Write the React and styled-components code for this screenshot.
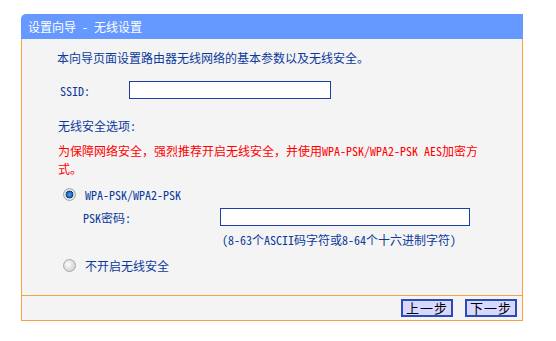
import React from "react";
import styled, { createGlobalStyle } from "styled-components";

const GlobalStyle = createGlobalStyle`
  html, body {
    margin: 0;
    padding: 0;
    background: #ffffff;
  }
  body {
    font-family: "Noto Sans Mono CJK SC", "Noto Sans CJK SC", monospace;
    font-size: 12px;
    color: #0b3a9c;
  }
`;

const Page = styled.div`
  width: 556px;
  height: 341px;
  padding: 14px 0 0 21px;
  box-sizing: border-box;
`;

const Panel = styled.div`
  width: 502px;
`;

const Header = styled.div`
  height: 25px;
  line-height: 25px;
  background: #6699ff;
  color: #ffffff;
  padding-left: 7px;
  border-top-left-radius: 5px;
`;

const Body = styled.div`
  height: 256px;
  box-sizing: border-box;
  background: #f4f4f4;
  border-left: 1px solid #f8a046;
  border-right: 1px solid #f8a046;
  padding: 10px 0 0 35px;
  display: flex;
  flex-direction: column;
`;

const Line = styled.div`
  line-height: 18px;
  margin-top: ${(p) => p.$top || 0}px;
  padding-left: ${(p) => p.$indent || 0}px;
  color: ${(p) => (p.$warn ? "#ff0000" : "#0b3a9c")};
  width: ${(p) => p.$width || "auto"};
`;

const FieldRow = styled.div`
  display: flex;
  align-items: center;
  height: 18px;
  margin-top: ${(p) => p.$top || 0}px;
  padding-left: ${(p) => p.$indent || 0}px;
`;

const Label = styled.span`
  width: ${(p) => p.$width}px;
  flex: none;
`;

const TextInput = styled.input`
  box-sizing: border-box;
  width: ${(p) => p.$width}px;
  height: 18px;
  border: 1px solid #1c3fa6;
  background: #ffffff;
  padding: 0 3px;
  margin: 0;
  outline: none;
  font: inherit;
`;

const Radio = styled.span`
  width: 13px;
  height: 13px;
  border-radius: 50%;
  flex: none;
  box-sizing: border-box;
  border: 1px solid #a8a8a8;
  background: ${(p) =>
    p.$checked
      ? "radial-gradient(circle at 50% 50%, #4aa6e8 0, #1a6fc0 2.5px, #0d3f7a 3.6px, #e9e9e9 4.2px, #d0d0d0 100%)"
      : "radial-gradient(circle at 40% 40%, #ffffff 0, #e4e4e4 4px, #c8c8c8 100%)"};
  margin-right: 9px;
`;

const Footer = styled.div`
  height: 26px;
  box-sizing: border-box;
  background: #f4f4f4;
  border: 1px solid #f8a046;
  display: flex;
  justify-content: flex-end;
  align-items: center;
  gap: 12px;
  padding-right: 5px;
`;

const Button = styled.button`
  width: 52px;
  height: 18px;
  box-sizing: border-box;
  border: 2px solid #2a4cb4;
  background: #d6d8ff;
  color: #000000;
  font-family: "Noto Sans CJK SC", sans-serif;
  font-size: 13px;
  line-height: 14px;
  padding: 0;
  letter-spacing: 1px;
`;

export default function App() {
  return (
    <Page>
      <GlobalStyle />
      <Panel>
        <Header>设置向导 - 无线设置</Header>
        <Body>
          <Line>本向导页面设置路由器无线网络的基本参数以及无线安全。</Line>
          <FieldRow $top={14} $indent={3}>
            <Label $width={69}>SSID:</Label>
            <TextInput $width={202} defaultValue="" />
          </FieldRow>
          <Line $top={18} $indent={1}>无线安全选项:</Line>
          <Line $top={7} $indent={1} $warn $width="430px">
            为保障网络安全，强烈推荐开启无线安全，并使用WPA-PSK/WPA2-PSK AES加密方式。
          </Line>
          <FieldRow $top={7} $indent={6}>
            <Radio $checked />
            <span>WPA-PSK/WPA2-PSK</span>
          </FieldRow>
          <FieldRow $top={5} $indent={26}>
            <Label $width={137}>PSK密码:</Label>
            <TextInput $width={250} defaultValue="" />
          </FieldRow>
          <Line $top={5} $indent={165}>(8-63个ASCII码字符或8-64个十六进制字符)</Line>
          <FieldRow $top={7} $indent={6}>
            <Radio />
            <span>不开启无线安全</span>
          </FieldRow>
        </Body>
        <Footer>
          <Button>上一步</Button>
          <Button>下一步</Button>
        </Footer>
      </Panel>
    </Page>
  );
}
